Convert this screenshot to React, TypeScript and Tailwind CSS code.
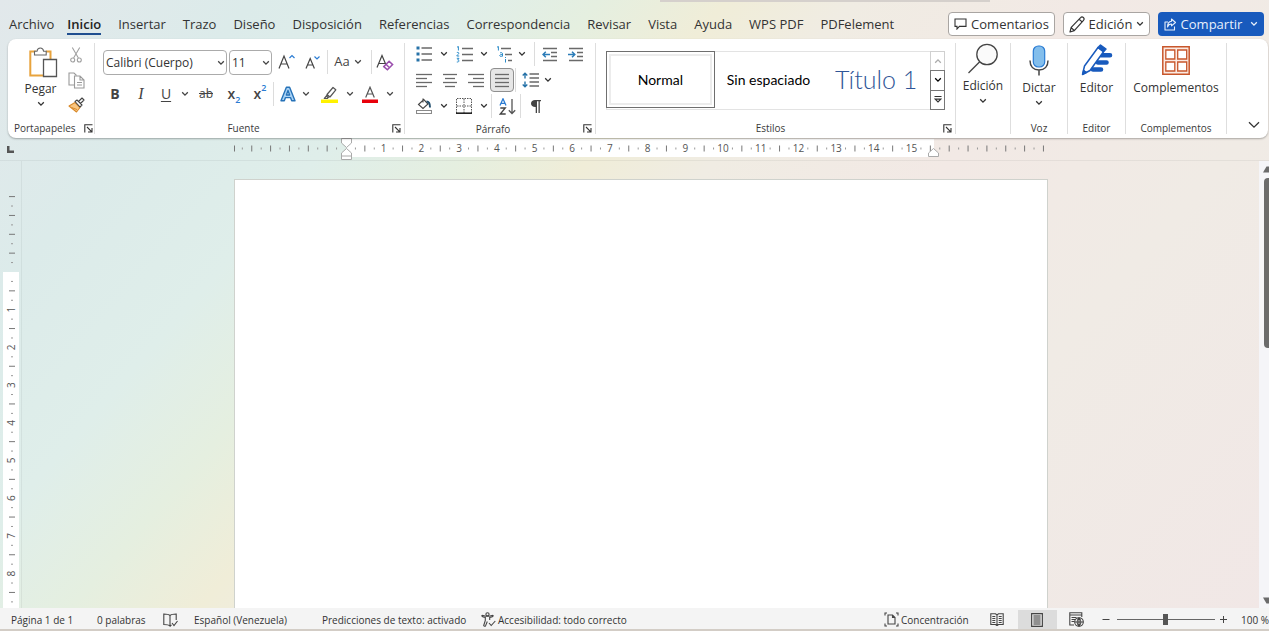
import React from "react";

type IconProps = { className?: string };

function Chevron({ className = "" }: IconProps) {
  return (
    <svg className={"shrink-0 " + className} width="8" height="6" viewBox="0 0 8 6" fill="none" stroke="currentColor" strokeWidth="1.3">
      <path d="M1.2 1.3 4 4.1 6.8 1.3" />
    </svg>
  );
}

function Launcher() {
  return (
    <svg width="9" height="9" viewBox="0 0 9 9" fill="none" stroke="#333" strokeWidth="1.1">
      <path d="M8.5.8H.8v7.7M3 3l4.8 4.8M8 4v4H4" />
    </svg>
  );
}

function Lines({ rows }: { rows: [number, number][] }) {
  return (
    <svg width="16" height="15" viewBox="0 0 16 15" stroke="#6a6a6a" strokeWidth="1.3">
      {rows.map(([a, b], i) => (
        <path key={i} d={`M${a} ${1.5 + i * 4}H${b}`} />
      ))}
    </svg>
  );
}

function Btn({ label, w = "w-[26px]", h = "h-[24px]", className = "", children }: { label: string; w?: string; h?: string; className?: string; children: React.ReactNode }) {
  return (
    <button type="button" aria-label={label} className={`flex shrink-0 items-center justify-center rounded ${w} ${h} ${className}`}>
      {children}
    </button>
  );
}

function More({ label, w = "w-[14px]" }: { label: string; w?: string }) {
  return (
    <Btn label={label} w={w}>
      <Chevron />
    </Btn>
  );
}

function Sep({ className = "" }: IconProps) {
  return <span className={"h-6 w-px shrink-0 bg-[#dcdcdc] " + className} />;
}

function Group({ label, launcher = false, className = "", children }: { label?: string; launcher?: boolean; className?: string; children: React.ReactNode }) {
  return (
    <section className={"flex flex-col " + className}>
      <div className="flex-1">{children}</div>
      <div className={"flex h-5 items-center " + (launcher ? "gap-2 pr-[3px]" : "")}>
        <span className="flex-1 text-center text-[10px] leading-4 text-[#3a3a3a]">{label}</span>
        {launcher && (
          <button type="button" aria-label={"Configuración de " + label}>
            <Launcher />
          </button>
        )}
      </div>
    </section>
  );
}

function GroupLine() {
  return <span className="my-1 w-px shrink-0 bg-[#dedede]" />;
}

function BigButton({ label, more = false, icon }: { label: string; more?: boolean; icon: React.ReactNode }) {
  return (
    <button type="button" className="flex w-full flex-col items-center pt-[3px] text-[12px] leading-4">
      <span className="flex h-9 items-center justify-center">{icon}</span>
      {label}
      {more && <Chevron className="mt-1" />}
    </button>
  );
}

const tabs = ["Archivo", "Inicio", "Insertar", "Trazo", "Diseño", "Disposición", "Referencias", "Correspondencia", "Revisar", "Vista", "Ayuda", "WPS PDF", "PDFelement"];

function TopBar() {
  return (
    <header className="relative flex h-[39px] shrink-0 items-start pt-2 pr-[5px] pl-[9px]">
      <span className="absolute top-0 left-[52%] h-[2px] w-[26%] bg-[#d5d0cc]" />
      <nav className="flex gap-[17px] pt-1 text-[13px] leading-6 whitespace-nowrap text-[#333]">
        {tabs.map((t) =>
          t === "Inicio" ? (
            <a key={t} href="#inicio" aria-current="page" className="-ml-1 h-[23px] border-b-2 border-[#1f4e8f] font-semibold text-[#222]">
              {t}
            </a>
          ) : (
            <a key={t} href="#cinta">
              {t}
            </a>
          ),
        )}
      </nav>
      <div className="ml-auto flex gap-2 pt-1 text-[13px] leading-5 text-[#333]">
        <button type="button" className="flex h-6 w-[107px] items-center justify-center gap-1 rounded border border-[#a9a5a2] bg-white">
          <svg width="13" height="12" viewBox="0 0 13 12" fill="none" stroke="#333" strokeWidth="1.1">
            <path d="M1 1h11v7.4H5.4L3 11V8.400H1z" />
          </svg>
          Comentarios
        </button>
        <button type="button" className="flex h-6 w-[87px] items-center justify-center gap-1 rounded border border-[#a9a5a2] bg-white">
          <svg width="16" height="17" viewBox="0 0 16 17" fill="none" stroke="#333" strokeWidth="1.2" strokeLinejoin="round">
            <path d="M1 16l1.200-4.600L11.600 1.700a1.900 1.900 0 0 1 2.900 2.600L5.300 14.600zM10.200 3.200l2.900 2.700M2.200 11.600l3 2.900" />
          </svg>
          Edición
          <Chevron />
        </button>
        <button type="button" className="flex h-6 w-[106px] items-center justify-center gap-1 rounded bg-[#185abd] font-medium text-[#e8f0fb]">
          <svg width="13" height="13" viewBox="0 0 13 13" fill="none" stroke="currentColor" strokeWidth="1.1" strokeLinejoin="round">
            <path d="M4 4H1v8h9.500V8.500M7.500 1l4 3.500-4 3.300V6C5.500 6 4 7 3.500 9c0-3 1.200-5.600 4-5.800z" />
          </svg>
          Compartir
          <Chevron className="ml-1" />
        </button>
      </div>
    </header>
  );
}

function Clipboard() {
  return (
    <Group label="Portapapeles" launcher className="w-[86px] shrink-0 pl-[6px]">
      <div className="flex pt-1 pl-[2px]">
        <button type="button" className="flex w-[49px] flex-col items-center pt-1 text-[12px] leading-4">
          <svg className="ml-1" width="30" height="31" viewBox="0 0 30 31" fill="none">
            <path d="M8 4.500H2.300v24H15M18 4.500h4.500V12" stroke="#e8a33d" strokeWidth="2" />
            <path d="M6.500 8V4.200H9C9.300 2 10.400 1 12.300 1s3 1 3.300 3.200h2.600V8z" fill="#fff" stroke="#666" strokeWidth="1.100" />
            <path d="M15.500 12.500h13v17h-13z" fill="#fff" stroke="#555" strokeWidth="1.300" />
          </svg>
          <span className="mt-[3px]">Pegar</span>
          <Chevron className="mt-1" />
        </button>
        <div className="flex flex-col">
          <Btn label="Cortar" w="w-[22px]">
            <svg width="12" height="16" viewBox="0 0 12 16" fill="none" stroke="#a0a0a0" strokeWidth="1.100">
              <path d="M2.300.5 8.400 11M9.700.5 3.600 11" />
              <circle cx="2.700" cy="13" r="2" />
              <circle cx="9.300" cy="13" r="2" />
            </svg>
          </Btn>
          <Btn label="Copiar" w="w-[22px]" h="h-[26px]">
            <svg width="17" height="17" viewBox="0 0 17 17" fill="none" stroke="#9a9a9a" strokeWidth="1.100">
              <path d="M6.500 13H1V1h5l2.500 2.500" />
              <path d="M6.500 4h5.500l4 4v8H6.500zM12 4v4h4M9 10.500h5M9 13h5" />
            </svg>
          </Btn>
          <Btn label="Copiar formato" w="w-[22px]">
            <svg width="17" height="16" viewBox="0 0 17 16" fill="none" strokeLinejoin="round">
              <path d="M1 9 7 5.500l5 5L8.500 15z" fill="#f9c681" stroke="#d98a2b" strokeWidth="1.100" />
              <path d="M3.500 10.500 9 12.500" stroke="#d98a2b" />
              <path d="M7 4.500 9 3l5 5-2 2zM10.500 4.500 14 1l2 2-3.500 3.500" fill="#fff" stroke="#444" strokeWidth="1.100" />
            </svg>
          </Btn>
        </div>
      </div>
    </Group>
  );
}

function Picker({ label, value, className }: { label: string; value: string; className: string }) {
  return (
    <div className={"relative shrink-0 " + className}>
      <select aria-label={label} defaultValue={value} className="block h-[25px] w-full appearance-none rounded border border-[#ababab] bg-white pl-[2px] text-[12px] leading-[23px] text-[#333]">
        <option>{value}</option>
      </select>
      <Chevron className="pointer-events-none absolute top-[10px] right-[2px]" />
    </div>
  );
}

function FontGroup() {
  return (
    <Group label="Fuente" launcher className="w-[309px] shrink-0 pl-2">
      <div className="pt-[7px]">
        <div className="flex h-8 items-center text-[#444]">
          <Picker label="Fuente" value="Calibri (Cuerpo)" className="w-[124px]" />
          <Picker label="Tamaño" value="11" className="ml-[2px] w-[43px]" />
          <Btn label="Aumentar tamaño" className="ml-[1px]">
            <svg width="17" height="16" viewBox="0 0 17 16" fill="none" stroke="#444" strokeWidth="1.200">
              <path d="M1 14.500 6 2l5 12.500M2.800 10h6.400" />
              <path d="M11.500 4 14 1.500 16.500 4" stroke="#2b7cd3" />
            </svg>
          </Btn>
          <Btn label="Disminuir tamaño">
            <svg width="15" height="15" viewBox="0 0 15 15" fill="none" stroke="#444" strokeWidth="1.200">
              <path d="M1 13.500 5.200 3.500l4.200 10M2.600 10h5.200" />
              <path d="M9.500 1.500 12 4l2.500-2.500" stroke="#2b7cd3" />
            </svg>
          </Btn>
          <Sep className="ml-[2px]" />
          <button type="button" aria-label="Cambiar mayúsculas" className="flex h-6 w-[40px] items-center justify-center gap-1 text-[13px]">
            Aa
            <Chevron />
          </button>
          <Sep className="ml-[3px]" />
          <Btn label="Borrar formato">
            <svg width="18" height="17" viewBox="0 0 18 17" fill="none" stroke="#444" strokeWidth="1.200">
              <path d="M1 13.500 6 1.500l3.800 9M2.800 9.500h6" />
              <path d="m7.800 12.600 5.300-5.300 3.500 3.300-5.200 5.200zM10 10.300l3.500 3.400" stroke="#9b4fae" fill="#fff" strokeWidth="1.500" />
            </svg>
          </Btn>
        </div>
        <div className="-ml-[1px] flex h-8 items-center text-[14px] leading-5 text-[#444]">
          <Btn label="Negrita" className="font-bold">B</Btn>
          <Btn label="Cursiva" className="font-[Liberation_Serif,serif] text-[16px] italic">I</Btn>
          <Btn label="Subrayado" w="w-[24px]" className="underline underline-offset-2">U</Btn>
          <More label="Más subrayados" />
          <Btn label="Tachado" w="w-[28px]" className="text-[12px] line-through">ab</Btn>
          <Btn label="Subíndice" w="w-[28px]" className="font-semibold">
            x<span className="self-end text-[9px] leading-3 text-[#2b7cd3]">2</span>
          </Btn>
          <Btn label="Superíndice" w="w-[24px]" className="font-semibold">
            x<span className="self-start text-[9px] leading-3 text-[#2b7cd3]">2</span>
          </Btn>
          <Sep className="ml-[1px]" />
          <Btn label="Efectos de texto" w="w-[28px]">
            <svg width="16" height="16" viewBox="0 0 16 16" fill="#fff" stroke="#2672b8" strokeWidth="1.400" strokeLinejoin="round">
              <path d="M1 14.800 6.400 1.200h3.200L15 14.800h-3.300l-1.200-3.200H5.500l-1.200 3.200zM6.400 9h3.200L8 4.500z" fill="#a9d2f5" />
            </svg>
          </Btn>
          <More label="Más efectos" w="w-[8px]" />
          <Btn label="Resaltado" w="w-[38px]">
            <svg width="17" height="17" viewBox="0 0 17 17" fill="none" stroke="#555" strokeWidth="1.200" strokeLinejoin="round">
              <path d="M0 13.500h17V17H0z" fill="#fff200" stroke="none" />
              <path d="M6 8.500 12 1.500l2.800 2.300L9 11H6.200zM6 8.500l3 2.400M5.800 9.500 3.300 12.500h3l1.500-1.600" />
            </svg>
          </Btn>
          <More label="Color de resaltado" w="w-[4px]" />
          <Btn label="Color de fuente" w="w-[36px]">
            <svg width="16" height="17" viewBox="0 0 16 17" fill="none" stroke="#555" strokeWidth="1.200">
              <path d="M0 13.500h16V17H0z" fill="#e8000b" stroke="none" />
              <path d="M3.700 11.500 8 1.200l4.300 10.300M5.200 8h5.600" />
            </svg>
          </Btn>
          <More label="Más colores" w="w-[4px]" />
        </div>
      </div>
    </Group>
  );
}

function ParagraphGroup() {
  return (
    <Group label="Párrafo" launcher className="w-[190px] shrink-0 pl-[6px]">
      <div className="pt-[2px] text-[#333]">
        <div className="flex h-[26px] items-center">
          <Btn label="Viñetas">
            <svg width="16" height="16" viewBox="0 0 16 16" stroke="#6a6a6a" strokeWidth="1.300">
              <path d="M5.500 2H16M5.500 8H16M5.500 14H16" />
              <path d="M.5.500h3v3h-3zM.5 6.500h3v3h-3zM.5 12.500h3v3h-3z" fill="#2672a8" stroke="none" />
            </svg>
          </Btn>
          <More label="Más viñetas" />
          <Btn label="Numeración">
            <svg width="17" height="17" viewBox="0 0 17 17" fill="none" stroke="#6a6a6a" strokeWidth="1.300">
              <path d="M6 2.500h11M6 8.500h11M6 14.500h11" />
              <path d="M1 1.200 2.400.5v4M.8 7c.3-1 2.200-.8 2 .3 0 .7-1.800 1.400-2 2.700h2.400M.8 12.300h2.200L1.700 14c1.800-.1 1.900 2.300-.9 2" stroke="#2b8bc9" strokeWidth="1" />
            </svg>
          </Btn>
          <More label="Más numeración" />
          <Btn label="Lista multinivel">
            <svg width="17" height="17" viewBox="0 0 17 17" fill="none" stroke="#6a6a6a" strokeWidth="1.300">
              <path d="M5 2.500h10M9 8.500h7M12 14.500h4" />
              <path d="M1 1.200 2.400.5v4M4 7c1-.8 2.500-.5 2.500.8v2.700M6.500 8.500C4.500 8.300 3.500 9 3.800 9.900c.4.900 2.300.7 2.700-.6M9.500 13v3.500M9.500 11v1" stroke="#2b8bc9" strokeWidth="1" />
            </svg>
          </Btn>
          <More label="Más listas" w="w-[10px]" />
          <Sep className="mr-[2px] ml-[7px]" />
          <Btn label="Disminuir sangría">
            <svg width="16" height="15" viewBox="0 0 16 15" fill="none" stroke="#6a6a6a" strokeWidth="1.300">
              <path d="M1 1.500h14M9 5.500h6M9 9.500h6M1 13.500h14" />
              <path d="M8 7.500H1M3.800 4.700 1 7.500l2.800 2.800" stroke="#2b7cb8" strokeWidth="1.500" />
            </svg>
          </Btn>
          <Btn label="Aumentar sangría">
            <svg width="16" height="15" viewBox="0 0 16 15" fill="none" stroke="#6a6a6a" strokeWidth="1.300">
              <path d="M1 1.500h14M9 5.500h6M9 9.500h6M1 13.500h14" />
              <path d="M0 7.500h7M4 4.700l2.800 2.800L4 10.300" stroke="#2b7cb8" strokeWidth="1.500" />
            </svg>
          </Btn>
        </div>
        <div className="flex h-[26px] items-center">
          <Btn label="Alinear a la izquierda"><Lines rows={[[0, 16], [0, 11], [0, 16], [0, 11]]} /></Btn>
          <Btn label="Centrar"><Lines rows={[[1, 15], [3, 13], [1, 15], [3, 13]]} /></Btn>
          <Btn label="Alinear a la derecha"><Lines rows={[[0, 16], [5, 16], [0, 16], [5, 16]]} /></Btn>
          <Btn label="Justificar" w="w-[24px]" className="mx-[1px] border border-[#8f8f8f] bg-[#e6e6e6]">
            <Lines rows={[[1, 15], [1, 15], [1, 15], [1, 15]]} />
          </Btn>
          <Sep />
          <Btn label="Interlineado" w="w-[28px]">
            <svg width="17" height="16" viewBox="0 0 17 16" fill="none" stroke="#6a6a6a" strokeWidth="1.300">
              <path d="M7.500 2H17M7.500 6H17M7.500 10H17M7.500 14H17" />
              <path d="M3 1.200v5.300M.7 3.500 3 1.200l2.300 2.300M3 9.500v5.300M.7 12.500 3 14.800l2.300-2.300" stroke="#2672a8" strokeWidth="1.400" />
            </svg>
          </Btn>
          <More label="Más interlineado" w="w-[8px]" />
        </div>
        <div className="flex h-[26px] items-center">
          <Btn label="Sombreado">
            <svg width="16" height="16" viewBox="0 0 16 16" fill="none" stroke="#444" strokeWidth="1.100">
              <path d="M.5 12.500h15v3H.5z" stroke="#8a8a8a" />
              <path d="M2.500 6.500 7.800 1.500 12 6 7 10.500zM7 .5v4" />
              <path d="M10.500 3.500c2.500 0 3.500 2 3.500 6" stroke="#24506f" strokeWidth="2" />
            </svg>
          </Btn>
          <More label="Más sombreado" />
          <Btn label="Bordes">
            <svg width="16" height="16" viewBox="0 0 16 16" fill="none" stroke="#555">
              <path d="M.5 15V.5h15V15M8 1v14M1 8h14" strokeDasharray="1.500 1" />
              <path d="M0 15.200h16" stroke="#222" strokeWidth="1.600" />
            </svg>
          </Btn>
          <More label="Más bordes" />
          <Sep className="mr-[2px]" />
          <Btn label="Ordenar">
            <svg width="17" height="17" viewBox="0 0 17 17" fill="none" strokeWidth="1.300">
              <path d="M1 7.500 4 .8l3 6.700M2 5.300h4" stroke="#2b7cd3" />
              <path d="M1.300 10h5L1.300 16h5.400" stroke="#444" />
              <path d="M13 1v14.500M9.800 12.300l3.200 3.200 3.200-3.200" stroke="#555" />
            </svg>
          </Btn>
          <Sep className="mr-[2px]" />
          <Btn label="Mostrar todo">
            <svg width="10" height="13" viewBox="0 0 10 13" fill="#444">
              <path d="M4 0h6v1.200H8.800V13H7.500V1.200H6V13H4.700V7C2 7.200 0 5.800 0 3.600 0 1.300 1.800 0 4 0z" />
            </svg>
          </Btn>
        </div>
      </div>
    </Group>
  );
}

function StylesGroup() {
  return (
    <Group label="Estilos" launcher className="min-w-[340px] flex-1 pl-[10px]">
      <div className="mt-3 mr-[10px] flex h-[59px] border border-[#e3e3e3] font-[Lato,sans-serif] text-[14px] text-black">
        <div className="grid flex-1 grid-cols-3 whitespace-nowrap">
          <button type="button" className="-mt-px -ml-px h-[57px] border border-[#6f6f6f] p-[2px]">
            <span className="flex h-full items-center justify-center border-2 border-[#ececec]">Normal</span>
          </button>
          <button type="button" className="pb-[2px]">Sin espaciado</button>
          <button type="button" className="pb-[2px] text-[25px] font-light text-[#2f5597]">Título 1</button>
        </div>
        <div className="-my-px -mr-px flex w-[15px] flex-col">
          <button type="button" aria-label="Anterior" className="flex flex-1 items-center justify-center border border-b-0 border-[#d0d0d0] text-[#aaa]">
            <Chevron className="rotate-180" />
          </button>
          <button type="button" aria-label="Siguiente" className="flex flex-1 items-center justify-center border border-[#777]">
            <Chevron />
          </button>
          <button type="button" aria-label="Más estilos" className="flex flex-1 items-center justify-center border border-t-0 border-[#777]">
            <svg width="8" height="9" viewBox="0 0 8 9" fill="none" stroke="#333" strokeWidth="1.200">
              <path d="M.5 1.500h7M1.200 4.200 4 7l2.800-2.800z" />
            </svg>
          </button>
        </div>
      </div>
    </Group>
  );
}

function Ribbon() {
  return (
    <div className="relative z-10 mr-px ml-2 flex h-[99px] shrink-0 rounded-lg bg-white text-[#333] shadow-[0_1px_2px_rgba(0,0,0,0.3)]">
      <Clipboard />
      <GroupLine />
      <FontGroup />
      <GroupLine />
      <ParagraphGroup />
      <GroupLine />
      <StylesGroup />
      <GroupLine />
      <Group className="w-[54px] shrink-0">
        <BigButton
          label="Edición"
          more
          icon={
            <svg className="mb-1" width="32" height="31" viewBox="0 0 32 31" fill="none" stroke="#444" strokeWidth="1.300">
              <circle cx="20" cy="11.500" r="10.200" fill="#fafafa" />
              <path d="M12.700 18.700 1.500 30" />
            </svg>
          }
        />
      </Group>
      <GroupLine />
      <Group label="Voz" className="w-[56px] shrink-0">
        <div className="pt-[2px]">
          <BigButton
            label="Dictar"
            more
            icon={
              <svg className="mb-1" width="20" height="31" viewBox="0 0 20 31" fill="none" stroke="#444" strokeWidth="1.500">
                <rect x="4.300" y="1" width="11.400" height="21" rx="5" fill="#83beec" stroke="#2b7cd3" strokeWidth="1.200" />
                <path d="M1 15.500c0 6 3.600 9.500 9 9.500s9-3.500 9-9.500M10 25v5.500" />
              </svg>
            }
          />
        </div>
      </Group>
      <GroupLine />
      <Group label="Editor" className="w-[57px] shrink-0">
        <div className="pt-[2px]">
          <BigButton
            label="Editor"
            icon={
              <svg className="mb-1" width="32" height="32" viewBox="0 0 32 32" fill="none" stroke="#185abd">
                <path d="M20 11.300h9M17 18.500h8.500M12 25.500h8" strokeWidth="4.600" strokeLinecap="round" />
                <path d="M1.500 30.500 3.500 22 17 3.500l5.500 4.200L9 26.500z" fill="#fff" strokeWidth="1.500" strokeLinejoin="round" />
                <path d="M17 3.500 19.500 1 25 5l-2.500 2.700z" fill="#185abd" strokeWidth="1.500" strokeLinejoin="round" />
                <path d="M1.500 30.500 2.500 26l3.500 2.500z" fill="#185abd" />
              </svg>
            }
          />
        </div>
      </Group>
      <GroupLine />
      <Group label="Complementos" className="w-[100px] shrink-0">
        <div className="pt-[2px]">
          <BigButton
            label="Complementos"
            icon={
              <svg className="mb-[3px]" width="28" height="29" viewBox="0 0 28 29" fill="#fff" stroke="#c8562b" strokeWidth="1.300">
                <path d="M.8.800h26.400v27.400H.8z" fill="#fbeae2" strokeWidth="1.500" />
                <path d="M3.800 4h9v9h-9zM15.700 4h9v9h-9zM3.800 16h9v9h-9zM15.700 16h9v9h-9z" />
              </svg>
            }
          />
        </div>
      </Group>
      <GroupLine />
      <div className="flex w-[41px] shrink-0 items-end justify-end pr-2 pb-[9px]">
        <button type="button" aria-label="Contraer la cinta">
          <svg width="12" height="8" viewBox="0 0 12 8" fill="none" stroke="#333" strokeWidth="1.300">
            <path d="M1 1.200 6 6.200l5-5" />
          </svg>
        </button>
      </div>
    </div>
  );
}

const CM = 37.7;

function HorizontalRuler() {
  const marks = [];
  for (let q = -12; q <= 74; q++) {
    const x = Math.max(0.5, 112 + (q * CM) / 4);
    const cm = q / 4;
    if (q === 0) continue;
    if (q % 4 === 0 && cm > 0 && cm <= 15) {
      marks.push(
        <text key={q} x={x} y="14" textAnchor="middle" fontSize="10" fill="#555">
          {cm}
        </text>,
      );
    } else {
      marks.push(<path key={q} d={q % 2 === 0 ? `M${x} 7.500v6` : `M${x} 9.500v2`} stroke={q % 2 === 0 ? "#777" : "#999"} />);
    }
  }
  return (
    <div className="flex h-[23px] shrink-0 border-b border-black/5">
      <div className="flex w-[22px] items-center pl-[7px]">
        <svg width="7" height="7" viewBox="0 0 7 7" fill="#555">
          <path d="M0 0h2.500v4.500H7V7H0z" />
        </svg>
      </div>
      <div className="flex flex-1 justify-center">
        <svg width="814" height="22" viewBox="0 0 814 22">
          <path d="M113 1h587v18H113z" fill="#fff" />
          {marks}
          <path d="M107.500.500h10v4.500l-5 4.500-5-4.500zM107.500 21.500v-6.500l5-4.500 5 4.500v6.500zM107.500 18h10M694.500 18.500V15l5-4.500 5 4.500v3.500z" fill="#fff" stroke="#aaa" />
        </svg>
      </div>
      <div className="w-[10px]" />
    </div>
  );
}

function VerticalRuler() {
  const marks = [];
  for (let q = -8; q <= 35; q++) {
    const y = 111 + (q * CM) / 4;
    if (q === 0) continue;
    if (q % 4 === 0 && q > 0) {
      marks.push(
        <text key={q} transform={`translate(15 ${y}) rotate(-90)`} textAnchor="middle" fontSize="10" fill="#555">
          {q / 4}
        </text>,
      );
    } else {
      marks.push(<path key={q} d={q % 2 === 0 ? `M9 ${y}h6` : `M11 ${y}h2`} stroke={q % 2 === 0 ? "#777" : "#999"} />);
    }
  }
  return (
    <div className="w-[22px] shrink-0 overflow-hidden border-r border-black/5">
      <svg width="21" height="1000" viewBox="0 0 21 1000">
        <path d="M3 111h16v889H3z" fill="#fff" />
        {marks}
      </svg>
    </div>
  );
}

function ScrollBar() {
  return (
    <div className="flex w-[10px] shrink-0 flex-col items-end overflow-hidden bg-[#f5f5f8] pt-[5px] pb-1">
      <svg width="6" height="7" viewBox="0 0 6 7" fill="#6b6b6b">
        <path d="M0 6.500 3.500.5H6v6z" />
      </svg>
      <div className="mt-[5px] h-[170px] w-[5px] rounded-l bg-[#6b6b6b]" />
      <svg className="mt-auto" width="6" height="7" viewBox="0 0 6 7" fill="#6b6b6b">
        <path d="M0 .5 3.500 6.500H6v-6z" />
      </svg>
    </div>
  );
}

function StatusBar() {
  return (
    <footer className="flex h-[23px] shrink-0 items-center border-b-2 border-[#d3cdc6] bg-[#f4f4f4] pt-[2px] pl-[11px] text-[10px] leading-4 whitespace-nowrap text-[#333]">
      <span className="w-[86px]">Página 1 de 1</span>
      <span className="w-[66px]">0 palabras</span>
      <svg className="mr-4" width="15" height="14" viewBox="0 0 15 14" fill="none" stroke="#444" strokeWidth="1.100">
        <path d="M7 2.500C5.500 1 3 1 .8 1v10.500c2.200 0 4.700 0 6.200 1.500zM7 2.500C8.500 1 11 1 13.200 1v6M7 13l1.500-1M9 10l2 2.500L14.500 8" />
      </svg>
      <span className="w-[128px]">Español (Venezuela)</span>
      <span className="w-[159px]">Predicciones de texto: activado</span>
      <svg className="mr-[2px]" width="15" height="15" viewBox="0 0 15 15" fill="none" stroke="#444" strokeWidth="1.100">
        <circle cx="6.500" cy="2.300" r="1.600" />
        <path d="M1 3.200c-.6 1 .3 1.500 3.300 2.300v3L2.700 13.500c.5 1.200 1.500 1 2-.1L6.300 9.500M12 3.200c.6 1-.3 1.500-3.300 2.300V8M1 3.200l4 1.100h3L12 3.200M8 11l2.200 2.500L14.300 9" />
      </svg>
      <span>Accesibilidad: todo correcto</span>
      <div className="ml-auto flex h-full items-center">
        <button type="button" className="flex w-[93px] items-center gap-[2px]">
          <svg width="15" height="15" viewBox="0 0 15 15" fill="none" stroke="#444" strokeWidth="1.100">
            <path d="M3 1H1v2.500M12 1h2v2.500M3 14H1v-2.500M12 14h2v-2.500M4 3h4.500L11 5.500V12H4zM8.500 3v2.500H11" />
          </svg>
          Concentración
        </button>
        <Btn label="Modo de lectura" w="w-[41px]" h="h-full">
          <svg width="14" height="13" viewBox="0 0 14 13" fill="none" stroke="#444" strokeWidth="1.100">
            <path d="M7 2 5.500.8H.8v10.700h4.700L7 12.700l1.500-1.200h4.700V.8H8.500zM7 2v10.500M2.300 3.500h3M2.300 5.500h3M2.300 7.500h3M2.300 9.500h3M8.700 3.500h3M8.700 5.500h3M8.700 7.500h3M8.700 9.500h3" />
          </svg>
        </Btn>
        <Btn label="Diseño de impresión" w="w-[39px]" h="h-full" className="rounded-none bg-[#dcdcdc]">
          <svg width="12" height="14" viewBox="0 0 12 14" fill="none" stroke="#444" strokeWidth="1.100">
            <path d="M.6.600h10.800v12.800H.6zM2.500 3h7M2.500 5h7M2.500 7h7M2.500 9h7M2.500 11h7" />
          </svg>
        </Btn>
        <Btn label="Diseño web" w="w-[40px]" h="h-full">
          <svg width="15" height="15" viewBox="0 0 15 15" fill="none" stroke="#444" strokeWidth="1.100">
            <path d="M5 13H.8V.8h12V5M.8 3h12M2.500 5.500h5M2.500 7.500h4M2.500 9.500h3" />
            <circle cx="10" cy="10" r="4.300" fill="#f4f4f4" />
            <path d="M5.700 10h8.600M10 5.700v8.600M10 5.700c-2.500 2.500-2.500 6 0 8.600M10 5.700c2.500 2.500 2.500 6 0 8.600" />
          </svg>
        </Btn>
        <button type="button" aria-label="Alejar" className="ml-1 w-4">
          <svg width="10" height="9" viewBox="0 0 10 9" stroke="#444"><path d="M1.500 4.500h7" /></svg>
        </button>
        <input
          type="range"
          aria-label="Zoom"
          defaultValue={50}
          className="h-3 w-[98px] appearance-none bg-transparent bg-[linear-gradient(#666,#666)] bg-[length:100%_1px] bg-center bg-no-repeat [&::-webkit-slider-thumb]:h-[11px] [&::-webkit-slider-thumb]:w-[5px] [&::-webkit-slider-thumb]:appearance-none [&::-webkit-slider-thumb]:bg-[#555]"
        />
        <button type="button" aria-label="Acercar" className="ml-1 w-[22px]">
          <svg width="9" height="9" viewBox="0 0 9 9" stroke="#444"><path d="M1 4.500h7M4.500 1v7" /></svg>
        </button>
        <span>100 %</span>
      </div>
    </footer>
  );
}

export default function App() {
  return (
    <div className="flex h-screen flex-col overflow-hidden bg-[linear-gradient(131deg,#e2e8eb_0%,#dcebea_14%,#dfeeea_25%,#e5efe0_33%,#f0edd8_40%,#f0ece3_47%,#f2e9e5_60%,#f0ebe5_75%,#f1e7e6_100%)] font-['Open_Sans','Noto_Sans',sans-serif]">
      <TopBar />
      <Ribbon />
      <HorizontalRuler />
      <main className="flex min-h-0 flex-1">
        <VerticalRuler />
        <div className="flex min-w-0 flex-1 justify-center pt-[18px]">
          <div role="textbox" aria-label="Documento" className="w-[814px] border border-b-0 border-[#cfd2cd] bg-white" />
        </div>
        <ScrollBar />
      </main>
      <StatusBar />
    </div>
  );
}
